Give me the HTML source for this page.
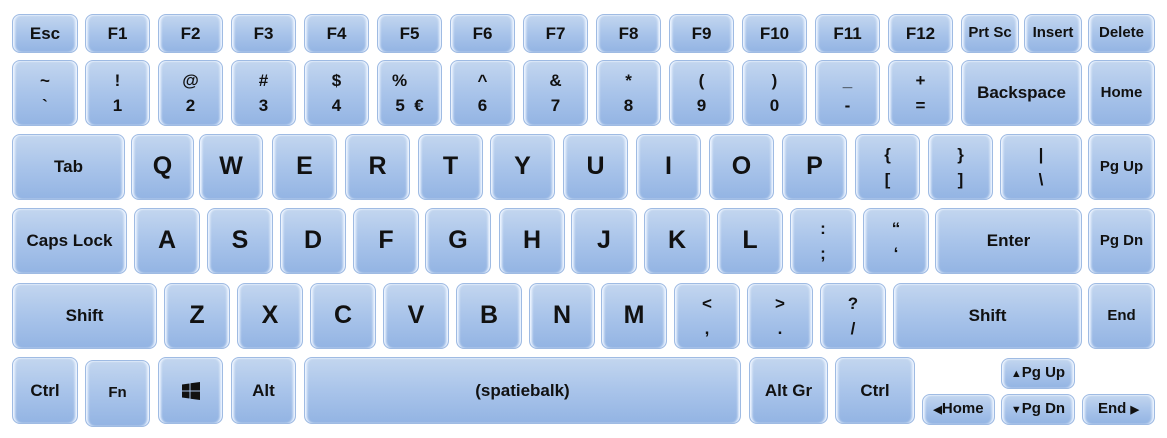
<!DOCTYPE html><html><head><style>
body{margin:0;width:1167px;height:438px;background:#fff;position:relative;overflow:hidden;font-family:"Liberation Sans",sans-serif;font-weight:bold;color:#111}
.k{position:absolute;box-sizing:border-box;border-radius:8px;background:linear-gradient(#c3d6ef,#a9c4ea 50%,#93b4e3);border:1px solid #9fbbe3;box-shadow:inset 3px 0 2px -1px #eef5ff,inset -3px 0 2px -1px #eef5ff,inset 0 1px 1px #d8e6f7;display:flex;flex-direction:column;align-items:center;justify-content:center;font-size:17px;line-height:1.25;text-align:center}
.L{font-size:25px}
.s{font-size:15px}
.d{line-height:1.5}
</style></head><body>
<div class="k" style="left:12px;top:14px;width:66px;height:39px">Esc</div>
<div class="k" style="left:85px;top:14px;width:65px;height:39px">F1</div>
<div class="k" style="left:158px;top:14px;width:65px;height:39px">F2</div>
<div class="k" style="left:231px;top:14px;width:65px;height:39px">F3</div>
<div class="k" style="left:304px;top:14px;width:65px;height:39px">F4</div>
<div class="k" style="left:377px;top:14px;width:65px;height:39px">F5</div>
<div class="k" style="left:450px;top:14px;width:65px;height:39px">F6</div>
<div class="k" style="left:523px;top:14px;width:65px;height:39px">F7</div>
<div class="k" style="left:596px;top:14px;width:65px;height:39px">F8</div>
<div class="k" style="left:669px;top:14px;width:65px;height:39px">F9</div>
<div class="k" style="left:742px;top:14px;width:65px;height:39px">F10</div>
<div class="k" style="left:815px;top:14px;width:65px;height:39px">F11</div>
<div class="k" style="left:888px;top:14px;width:65px;height:39px">F12</div>
<div class="k s" style="left:961px;top:14px;width:58px;height:39px">Prt Sc</div>
<div class="k s" style="left:1024px;top:14px;width:58px;height:39px">Insert</div>
<div class="k s" style="left:1088px;top:14px;width:67px;height:39px">Delete</div>

<div class="k d" style="left:12px;top:60px;width:66px;height:66px">~<br>`</div>
<div class="k d" style="left:85px;top:60px;width:65px;height:66px">!<br>1</div>
<div class="k d" style="left:158px;top:60px;width:65px;height:66px">@<br>2</div>
<div class="k d" style="left:231px;top:60px;width:65px;height:66px">#<br>3</div>
<div class="k d" style="left:304px;top:60px;width:65px;height:66px">$<br>4</div>
<div class="k d" style="left:377px;top:60px;width:65px;height:66px"><span style="margin-right:20px">%</span><span>5 &nbsp;€</span></div>
<div class="k d" style="left:450px;top:60px;width:65px;height:66px">^<br>6</div>
<div class="k d" style="left:523px;top:60px;width:65px;height:66px">&amp;<br>7</div>
<div class="k d" style="left:596px;top:60px;width:65px;height:66px">*<br>8</div>
<div class="k d" style="left:669px;top:60px;width:65px;height:66px">(<br>9</div>
<div class="k d" style="left:742px;top:60px;width:65px;height:66px">)<br>0</div>
<div class="k d" style="left:815px;top:60px;width:65px;height:66px">_<br>-</div>
<div class="k d" style="left:888px;top:60px;width:65px;height:66px">+<br>=</div>
<div class="k" style="left:961px;top:60px;width:121px;height:66px">Backspace</div>
<div class="k s" style="left:1088px;top:60px;width:67px;height:66px">Home</div>

<div class="k" style="left:12px;top:134px;width:113px;height:66px">Tab</div>
<div class="k L" style="left:131px;top:134px;width:63px;height:66px">Q</div>
<div class="k L" style="left:199px;top:134px;width:64px;height:66px">W</div>
<div class="k L" style="left:272px;top:134px;width:65px;height:66px">E</div>
<div class="k L" style="left:345px;top:134px;width:65px;height:66px">R</div>
<div class="k L" style="left:418px;top:134px;width:65px;height:66px">T</div>
<div class="k L" style="left:490px;top:134px;width:65px;height:66px">Y</div>
<div class="k L" style="left:563px;top:134px;width:65px;height:66px">U</div>
<div class="k L" style="left:636px;top:134px;width:65px;height:66px">I</div>
<div class="k L" style="left:709px;top:134px;width:65px;height:66px">O</div>
<div class="k L" style="left:782px;top:134px;width:65px;height:66px">P</div>
<div class="k d" style="left:855px;top:134px;width:65px;height:66px">{<br>[</div>
<div class="k d" style="left:928px;top:134px;width:65px;height:66px">}<br>]</div>
<div class="k d" style="left:1000px;top:134px;width:82px;height:66px">|<br>\</div>
<div class="k s" style="left:1088px;top:134px;width:67px;height:66px">Pg Up</div>

<div class="k" style="left:12px;top:208px;width:115px;height:66px">Caps Lock</div>
<div class="k L" style="left:134px;top:208px;width:66px;height:66px">A</div>
<div class="k L" style="left:207px;top:208px;width:66px;height:66px">S</div>
<div class="k L" style="left:280px;top:208px;width:66px;height:66px">D</div>
<div class="k L" style="left:353px;top:208px;width:66px;height:66px">F</div>
<div class="k L" style="left:425px;top:208px;width:66px;height:66px">G</div>
<div class="k L" style="left:499px;top:208px;width:66px;height:66px">H</div>
<div class="k L" style="left:571px;top:208px;width:66px;height:66px">J</div>
<div class="k L" style="left:644px;top:208px;width:66px;height:66px">K</div>
<div class="k L" style="left:717px;top:208px;width:66px;height:66px">L</div>
<div class="k d" style="left:790px;top:208px;width:66px;height:66px">:<br>;</div>
<div class="k d" style="left:863px;top:208px;width:66px;height:66px">“<br>‘</div>
<div class="k" style="left:935px;top:208px;width:147px;height:66px">Enter</div>
<div class="k s" style="left:1088px;top:208px;width:67px;height:66px">Pg Dn</div>

<div class="k" style="left:12px;top:283px;width:145px;height:66px">Shift</div>
<div class="k L" style="left:164px;top:283px;width:66px;height:66px">Z</div>
<div class="k L" style="left:237px;top:283px;width:66px;height:66px">X</div>
<div class="k L" style="left:310px;top:283px;width:66px;height:66px">C</div>
<div class="k L" style="left:383px;top:283px;width:66px;height:66px">V</div>
<div class="k L" style="left:456px;top:283px;width:66px;height:66px">B</div>
<div class="k L" style="left:529px;top:283px;width:66px;height:66px">N</div>
<div class="k L" style="left:601px;top:283px;width:66px;height:66px">M</div>
<div class="k d" style="left:674px;top:283px;width:66px;height:66px">&lt;<br>,</div>
<div class="k d" style="left:747px;top:283px;width:66px;height:66px">&gt;<br>.</div>
<div class="k d" style="left:820px;top:283px;width:66px;height:66px">?<br>/</div>
<div class="k" style="left:893px;top:283px;width:189px;height:66px">Shift</div>
<div class="k s" style="left:1088px;top:283px;width:67px;height:66px">End</div>

<div class="k" style="left:12px;top:357px;width:66px;height:67px">Ctrl</div>
<div class="k s" style="left:85px;top:360px;width:65px;height:67px">Fn</div>
<div class="k" style="left:158px;top:357px;width:65px;height:67px"><svg width="18" height="18" viewBox="0 0 18 18"><path d="M0 2.5L7.5 1.5V8.5H0ZM8.5 1.3L18 0V8.5H8.5ZM0 9.5H7.5V16.5L0 15.5ZM8.5 9.5H18V18L8.5 16.7Z" fill="#111"/></svg></div>
<div class="k" style="left:231px;top:357px;width:65px;height:67px">Alt</div>
<div class="k" style="left:304px;top:357px;width:437px;height:67px">(spatiebalk)</div>
<div class="k" style="left:749px;top:357px;width:79px;height:67px">Alt Gr</div>
<div class="k" style="left:835px;top:357px;width:80px;height:67px">Ctrl</div>
<div class="k s" style="left:1001px;top:358px;width:74px;height:31px"><span><span style="font-size:11px">▲</span>Pg Up</span></div>
<div class="k s" style="left:922px;top:394px;width:73px;height:31px"><span><span style="font-size:11px">◀</span>Home</span></div>
<div class="k s" style="left:1001px;top:394px;width:74px;height:31px"><span><span style="font-size:11px">▼</span>Pg Dn</span></div>
<div class="k s" style="left:1082px;top:394px;width:73px;height:31px"><span>End <span style="font-size:11px">▶</span></span></div>
</body></html>
